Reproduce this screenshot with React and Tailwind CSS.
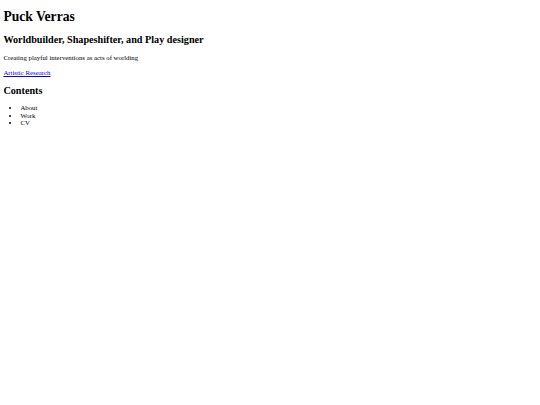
import React from 'react';

const App = () => {
  return (
    <div className="min-h-screen bg-white text-black font-['Liberation_Serif','Times_New_Roman',serif] px-[3.4px] py-[3.4px]">
      <h1 className="text-[13.6px] leading-[1.15] font-bold mt-[5.7px] mb-[9.1px]">Puck Verras</h1>
      <h2 className="text-[10.2px] leading-[1.15] font-bold my-[8.5px]">
        Worldbuilder, Shapeshifter, and Play designer
      </h2>
      <p className="text-[6.8px] leading-[1.15] my-[6.8px]">Creating playful interventions as acts of worlding</p>
      <p className="text-[6.8px] leading-[1.15] my-[6.8px]">
        <a href="#" className="text-[#0000ee] underline">Artistic Research</a>
      </p>
      <h2 className="text-[10.2px] leading-[1.15] font-bold mt-[8.5px] mb-[7.8px]">Contents</h2>
      <ul className="list-disc pl-[17px] my-[6.8px] text-[6.8px] leading-[7.5px]">
        <li>About</li>
        <li>Work</li>
        <li>CV</li>
      </ul>
    </div>
  );
};

export default App;
